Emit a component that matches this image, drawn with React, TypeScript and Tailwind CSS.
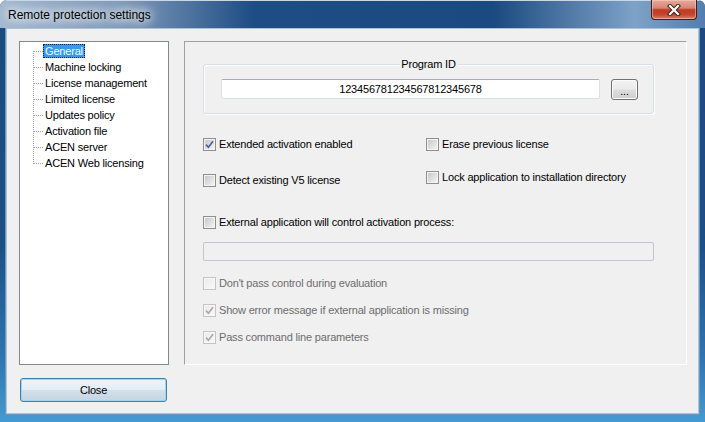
import clsx from "clsx";

const treeItems = [
  "General",
  "Machine locking",
  "License management",
  "Limited license",
  "Updates policy",
  "Activation file",
  "ACEN server",
  "ACEN Web licensing",
];

function Check({ checked = false, disabled = false }: { checked?: boolean; disabled?: boolean }) {
  return (
    <span
      className={clsx(
        "flex size-[13px] shrink-0 items-center justify-center border",
        disabled ? "border-[#c4c4c4] bg-[#f7f7f7]" : "border-[#8e8f8f] bg-[#f4f4f4]",
      )}
    >
      <span
        className={clsx(
          "flex size-[9px] items-center justify-center bg-gradient-to-br",
          disabled ? "from-[#ececec] to-[#f7f7f7]" : "from-[#c6c8ca] to-[#f3f3f3]",
        )}
      >
        {checked && (
          <svg width="9" height="9" viewBox="0 0 9 9" className="overflow-visible">
            <path
              d="M1 4.6 L3.4 7.2 L8 1.2"
              fill="none"
              stroke={disabled ? "#a8a8a8" : "#4a5f9c"}
              strokeWidth="1.6"
            />
          </svg>
        )}
      </span>
    </span>
  );
}

function CheckRow({ label, checked, disabled }: { label: string; checked?: boolean; disabled?: boolean }) {
  return (
    <div className="flex h-[13px] items-center">
      <Check checked={checked} disabled={disabled} />
      <span className={clsx("ml-[3px] whitespace-nowrap leading-[13px]", disabled ? "text-[#6d6d6d]" : "text-black")}>
        {label}
      </span>
    </div>
  );
}

function TreeRow({ label, index, last }: { label: string; index: number; last: boolean }) {
  const selected = index === 0;
  return (
    <div className="flex h-4 items-center pl-[13px]">
      <svg width="10" height="16" viewBox="0 0 10 16" shapeRendering="crispEdges" className="shrink-0">
        <line
          x1="0.5"
          y1={index === 0 ? 8 : 0}
          x2="0.5"
          y2={last ? 9 : 16}
          stroke="#a0a0a0"
          strokeDasharray="1 1"
        />
        <line x1="1" y1="8.5" x2="10" y2="8.5" stroke="#a0a0a0" strokeDasharray="1 1" />
      </svg>
      <span
        className={clsx(
          "h-[14px] whitespace-nowrap px-[2px] leading-[14px]",
          selected ? "bg-[#3399ff] text-white outline-1 outline-offset-[-1px] outline-[#1c1c1c] outline-dotted" : "text-black",
        )}
      >
        {label}
      </span>
    </div>
  );
}

export default function App() {
  return (
    <div className="flex h-[422px] w-[705px] flex-col overflow-hidden rounded-t-[7px] bg-[#1b4a80] font-['Liberation_Sans',Arial,sans-serif] text-[11px] tracking-[-0.18px] text-black">
      {/* title bar */}
      <div className="relative flex h-[28px] shrink-0 items-center border-t border-[#c9d7e6] bg-[linear-gradient(90deg,#a3b8cf_0%,#7d98b8_18%,#1d4d84_36%,#1b4a80_70%,#7ea2c7_90%,#4f7fb1_100%)] pl-[8px]">
        <span className="text-[12px] tracking-normal text-black [text-shadow:0_0_8px_#ffffff,0_0_12px_#ffffff,0_0_16px_#e8eef5]">
          Remote protection settings
        </span>
        <div className="absolute right-[8px] top-[-1px] flex h-[20px] w-[46px] items-center justify-center rounded-b-[4px] border border-t-0 border-[#4b1a12] bg-[linear-gradient(180deg,#e7aa9b_0%,#d88572_42%,#c03a22_52%,#c6452b_78%,#e08266_100%)] shadow-[inset_0_0_0_1px_rgba(255,220,210,0.45)]">
          <svg width="14" height="12" viewBox="0 0 14 12">
            <path d="M3 2 L11 10 M11 2 L3 10" stroke="#3b2620" strokeWidth="4.2" strokeLinecap="square" />
            <path d="M3 2 L11 10 M11 2 L3 10" stroke="#ffffff" strokeWidth="2.2" strokeLinecap="square" />
          </svg>
        </div>
      </div>

      {/* body */}
      <div className="flex flex-1 flex-col bg-[linear-gradient(180deg,#1b4a80_0%,#1d4f87_55%,#2f77b3_85%,#449bd2_100%)] px-[6px] pb-[8px]">
        <div className="flex flex-1 flex-col border border-[#aac3de] bg-[#f0f0f0] pl-[12px] pt-[12px] shadow-[-1px_0_0_#6f95bd,1px_0_0_#6f95bd,0_1px_0_#6f95bd]">
          <div className="flex">
            {/* tree */}
            <div className="h-[324px] w-[150px] shrink-0 border border-[#828790] bg-white pt-[1px]">
              {treeItems.map((item, i) => (
                <TreeRow key={item} label={item} index={i} last={i === treeItems.length - 1} />
              ))}
            </div>

            {/* page */}
            <div className="ml-[15px] h-[324px] w-[503px] shrink-0 border border-b-white border-l-[#a0a0a0] border-r-white border-t-[#a0a0a0] pl-[18px]">
              <div className="relative mt-[22px] h-[50px] w-[451px] rounded-[3px] border border-[#d5dfe5] shadow-[inset_1px_1px_0_#ffffff,1px_1px_0_#ffffff]">
                <span className="absolute left-1/2 top-[-7px] -translate-x-1/2 bg-[#f0f0f0] px-[2px] leading-[13px]">
                  Program ID
                </span>
                <div className="flex items-start pl-[17px] pt-[14px]">
                  <div className="flex h-[20px] w-[379px] items-center justify-center rounded-[2px] border border-[#dbdfe6] border-t-[#abadb3] bg-white">
                    123456781234567812345678
                  </div>
                  <div className="ml-[11px] flex h-[21px] w-[27px] items-center justify-center rounded-[3px] border border-[#707070] bg-[linear-gradient(180deg,#f2f2f2_0%,#ebebeb_48%,#dddddd_52%,#cfcfcf_100%)] shadow-[inset_0_0_0_1px_#fbfbfb] leading-none">
                    <span className="mt-[3px]">...</span>
                  </div>
                </div>
              </div>

              <div className="mt-[24px] flex">
                <div className="flex w-[223px] flex-col gap-[23px]">
                  <CheckRow label="Extended activation enabled" checked />
                  <CheckRow label="Detect existing V5 license" />
                </div>
                <div className="flex flex-col gap-[20px]">
                  <CheckRow label="Erase previous license" />
                  <CheckRow label="Lock application to installation directory" />
                </div>
              </div>

              <div className="mt-[29px]">
                <CheckRow label="External application will control activation process:" />
              </div>
              <div className="mt-[13px] h-[19px] w-[451px] rounded-[2px] border border-[#c2c5ca] bg-[#f0f0f0]" />

              <div className="mt-[16px] flex flex-col gap-[14px]">
                <CheckRow label="Don't pass control during evaluation" disabled />
                <CheckRow label="Show error message if external application is missing" checked disabled />
                <CheckRow label="Pass command line parameters" checked disabled />
              </div>
            </div>
          </div>

          <button className="ml-[1px] mt-[13px] flex h-[24px] w-[147px] items-center justify-center rounded-[3px] border border-[#3c7fb1] bg-[linear-gradient(180deg,#eef5fa_0%,#e3edf4_48%,#d2e0ea_52%,#c4d5e1_100%)] shadow-[inset_0_0_0_1px_#9fd5f5] text-black">
            Close
          </button>
        </div>
      </div>
    </div>
  );
}
